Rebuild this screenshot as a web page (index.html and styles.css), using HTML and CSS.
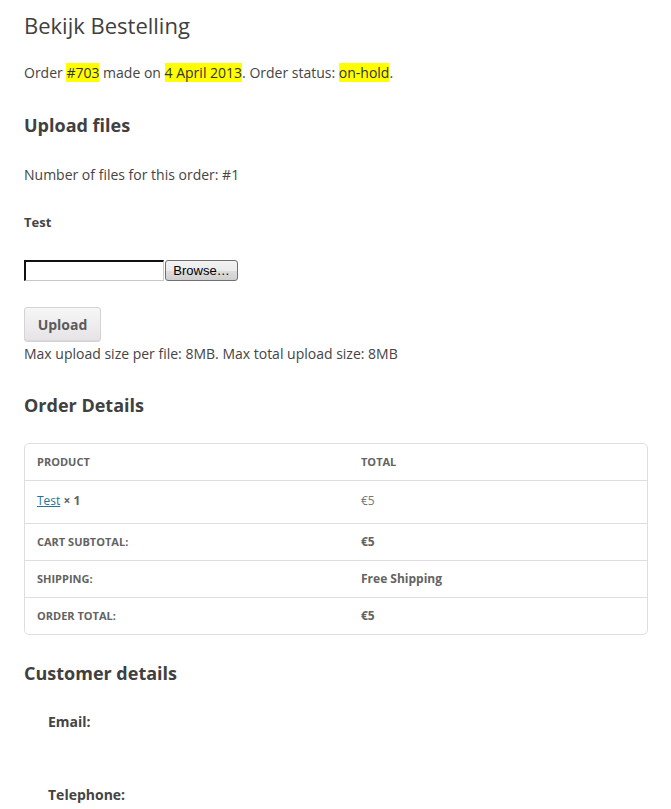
FILE: index.html
```html
<!DOCTYPE html>
<html lang="nl">
<head>
<meta charset="utf-8">
<title>Bekijk Bestelling</title>
<link rel="stylesheet" href="styles.css">
</head>
<body>
<main class="page">
  <h1 class="page-title">Bekijk Bestelling</h1>
  <p class="order-info">Order <mark>#703</mark> made on <mark>4 April 2013</mark>. Order status: <mark>on-hold</mark>.</p>

  <h2 class="section-title upload-title">Upload files</h2>
  <p class="files-count">Number of files for this order: #1</p>
  <p class="file-label">Test</p>
  <div class="file-field">
    <span class="file-box"></span><button class="browse-btn" type="button">Browse…</button>
  </div>
  <button class="upload-btn" type="button">Upload</button>
  <p class="max-size">Max upload size per file: 8MB. Max total upload size: 8MB</p>

  <h2 class="section-title details-title">Order Details</h2>
  <table class="order-table">
    <thead>
      <tr><th class="col-product">Product</th><th>Total</th></tr>
    </thead>
    <tbody>
      <tr class="item-row"><td class="col-product"><a href="#" class="product-link">Test</a> <strong class="qty">× 1</strong></td><td class="price">€5</td></tr>
    </tbody>
    <tfoot>
      <tr><th class="col-product">Cart Subtotal:</th><td class="strong">€5</td></tr>
      <tr><th class="col-product">Shipping:</th><td class="strong">Free Shipping</td></tr>
      <tr><th class="col-product">Order Total:</th><td class="strong">€5</td></tr>
    </tfoot>
  </table>

  <h2 class="section-title customer-title">Customer details</h2>
  <dl class="customer">
    <dt class="email">Email:</dt>
    <dt class="phone">Telephone:</dt>
  </dl>
</main>
</body>
</html>
```
FILE: styles.css
```css
* { box-sizing: border-box; }
html, body { margin: 0; padding: 0; background: #fff; }
body {
  font-family: "Open Sans", "Liberation Sans", sans-serif;
  color: #444444;
  font-size: 14px;
  line-height: 24px;
}
.page { padding: 12px 23px 0 24px; }
p, h1, h2, dl, dt { margin: 0; }

.page-title {
  font-size: 22px;
  font-weight: 400;
  line-height: 26px;
  color: #404040;
}
.order-info { margin-top: 23px; }
.order-info mark { background: #ffff00; color: #333; }

.section-title {
  font-size: 18px;
  font-weight: 700;
  line-height: 24px;
  color: #404040;
}
.upload-title { margin-top: 28px; }
.files-count { margin-top: 26px; }
.file-label { margin-top: 23px; font-size: 13px; font-weight: 700; }

.file-field { margin-top: 26px; display: flex; align-items: center; height: 21px; }
.file-box {
  display: block;
  width: 140px;
  height: 21px;
  border-top: 2px solid #111;
  border-left: 2px solid #111;
  border-right: 1px solid #c8c8c8;
  border-bottom: 1px solid #c8c8c8;
  background: #fff;
}
.browse-btn {
  margin-left: 1px;
  width: 73px;
  height: 21px;
  padding: 0;
  font-family: "Liberation Sans", Arial, sans-serif;
  font-size: 13px;
  color: #000;
  border: 1px solid #707070;
  border-radius: 3px;
  background: linear-gradient(#f2f2f2, #ebebeb 50%, #dddddd 51%, #cfcfcf);
}

.upload-btn {
  display: block;
  margin-top: 26px;
  width: 77px;
  height: 35px;
  padding: 0;
  font-family: "Open Sans", "Liberation Sans", sans-serif;
  font-size: 14px;
  font-weight: 700;
  color: #5b5b5b;
  border: 1px solid #d6d3d6;
  border-radius: 3px;
  background: linear-gradient(#f7f6f7, #e6e3e6);
  box-shadow: inset 0 -1px 0 rgba(0,0,0,0.05);
}
.max-size { margin-top: 0; }

.details-title { margin-top: 27px; }

.order-table {
  margin-top: 26px;
  width: 624px;
  border: 1px solid #e0dddf;
  border-radius: 5px;
  border-collapse: separate;
  border-spacing: 0;
  font-size: 12px;
}
.order-table th, .order-table td {
  text-align: left;
  padding: 0 12px;
  height: 37px;
  border-top: 1px solid #e0dddf;
  vertical-align: middle;
}
.order-table thead th { border-top: none; height: 36px; }
.order-table .col-product { width: 324px; }
.order-table th {
  font-size: 11px;
  font-weight: 700;
  text-transform: uppercase;
  color: #636363;
}
.order-table .item-row td { height: 43px; vertical-align: top; padding-top: 8px; }
.product-link { color: #21759b; text-decoration: underline; }
.qty { color: #636363; }
.price { color: #777777; }
.strong { font-weight: 700; color: #636363; }

.customer-title { margin-top: 26px; }
.customer { padding-left: 24px; font-size: 14px; font-weight: 700; }
.customer .email { margin-top: 25px; }
.customer .phone { margin-top: 49px; }
```
